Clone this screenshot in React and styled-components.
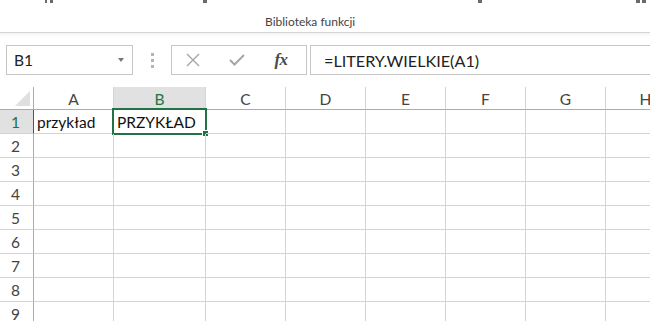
import React from "react";
import styled, { createGlobalStyle } from "styled-components";

const GlobalStyle = createGlobalStyle`
  html, body {
    margin: 0;
    padding: 0;
    background: #ffffff;
    overflow: hidden;
  }
  body {
    font-family: Lato, "Open Sans", sans-serif;
  }
`;

const GREEN = "#217346";

const Page = styled.div`
  width: 650px;
  height: 321px;
  overflow: hidden;
  background: #fff;
`;

const Ribbon = styled.div`
  height: 32px;
  border-bottom: 1px solid #d4d4d4;
  display: flex;
  flex-direction: column;
  justify-content: space-between;
  background: #fff;
`;

const CutRow = styled.div`
  display: flex;
  height: 3px;
  align-items: flex-start;
`;

const Cut = styled.span`
  display: block;
  margin-left: ${(p) => p.left}px;
  width: ${(p) => p.w}px;
  height: 3px;
  background: #6a6a6a;
`;

const GroupLabel = styled.div`
  padding-left: 265px;
  padding-bottom: 3px;
  font-family: Lato, sans-serif;
  font-size: 12px;
  color: #444;
`;

const FormulaBar = styled.div`
  height: 54px;
  display: flex;
  align-items: flex-start;
  padding: 12px 0 0 6px;
  box-sizing: border-box;
  background: linear-gradient(#f3f3f3 0px, #ffffff 4px);
`;

const NameBox = styled.div`
  width: 127px;
  height: 30px;
  border: 1px solid #c6c6c6;
  box-sizing: border-box;
  display: flex;
  align-items: center;
  justify-content: space-between;
  padding: 0 8px 0 7px;
  font-size: 15.5px;
  color: #222;
`;

const Arrow = styled.span`
  width: 0;
  height: 0;
  border-left: 3.5px solid transparent;
  border-right: 3.5px solid transparent;
  border-top: 4px solid #777;
`;

const Dots = styled.div`
  width: 38px;
  height: 30px;
  display: flex;
  flex-direction: column;
  align-items: center;
  justify-content: center;
  gap: 3px;
`;

const Dot = styled.span`
  width: 3px;
  height: 3px;
  background: #b4b4b4;
`;

const ButtonBox = styled.div`
  width: 136px;
  height: 30px;
  border: 1px solid #c6c6c6;
  box-sizing: border-box;
  display: flex;
  align-items: center;
  padding-left: 9px;
  gap: 20px;
`;

const IconSlot = styled.span`
  width: 24px;
  height: 20px;
  display: flex;
  align-items: center;
  justify-content: center;
`;

const Fx = styled.span`
  font-family: "Liberation Serif", serif;
  font-style: italic;
  font-weight: bold;
  font-size: 17px;
  color: #4a4a4a;
  letter-spacing: -0.5px;
`;

const FormulaInput = styled.div`
  flex: 1;
  height: 30px;
  margin-left: 3px;
  border: 1px solid #c6c6c6;
  border-right: none;
  box-sizing: border-box;
  display: flex;
  align-items: center;
  padding-left: 13px;
  font-size: 16.2px;
  color: #222;
`;

const Grid = styled.div`
  display: grid;
  grid-template-columns: 34px 80px 92px 80px 80px 80px 80px 80px 80px;
  grid-auto-rows: 24px;
  grid-template-rows: 23px;
  width: max-content;
`;

const Corner = styled.div`
  border-right: 1px solid #ababab;
  border-bottom: 1px solid #ababab;
  display: flex;
  align-items: flex-end;
  justify-content: flex-end;
  padding: 0 3px 3px 0;
`;

const ColHead = styled.div`
  border-right: 1px solid #d4d4d4;
  border-bottom: 1px solid ${(p) => (p.sel ? GREEN : "#ababab")};
  background: ${(p) => (p.sel ? "#e1e1e1" : "#fff")};
  color: ${(p) => (p.sel ? GREEN : "#444")};
  font-size: 15.5px;
  display: flex;
  align-items: center;
  justify-content: center;
  padding-top: 1px;
  white-space: nowrap;
`;

const RowHead = styled.div`
  border-right: 1px solid ${(p) => (p.sel ? GREEN : "#ababab")};
  border-bottom: 1px solid #d4d4d4;
  background: ${(p) => (p.sel ? "#e1e1e1" : "#fff")};
  color: ${(p) => (p.sel ? GREEN : "#444")};
  font-size: 15.5px;
  display: flex;
  align-items: center;
  justify-content: center;
  padding-right: 2px;
`;

const Cell = styled.div`
  position: relative;
  border-right: 1px solid #d4d4d4;
  border-bottom: 1px solid #d4d4d4;
  font-size: 15.5px;
  color: #111;
  display: flex;
  align-items: center;
  padding-left: 3px;
  white-space: nowrap;
  overflow: visible;
`;

const Selection = styled.div`
  position: absolute;
  left: -2px;
  top: -2px;
  right: -2px;
  bottom: -2px;
  border: 2px solid ${GREEN};
  pointer-events: none;
  &::after {
    content: "";
    position: absolute;
    right: -4px;
    bottom: -4px;
    width: 5px;
    height: 5px;
    background: ${GREEN};
    border: 1px solid #fff;
  }
`;

const cols = ["A", "B", "C", "D", "E", "F", "G", "H"];
const rows = [1, 2, 3, 4, 5, 6, 7, 8, 9];

const data = { "A1": "przykład", "B1": "PRZYKŁAD" };

export default function App() {
  return (
    <Page>
      <GlobalStyle />
      <Ribbon>
        <CutRow>
          <Cut left={45} w={2} />
          <Cut left={3} w={3} />
          <Cut left={150} w={4} />
          <Cut left={271} w={4} />
          <Cut left={154} w={4} />
          <Cut left={2} w={4} />
        </CutRow>
        <GroupLabel>Biblioteka funkcji</GroupLabel>
      </Ribbon>

      <FormulaBar>
        <NameBox>
          <span>B1</span>
          <Arrow />
        </NameBox>
        <Dots>
          <Dot />
          <Dot />
          <Dot />
        </Dots>
        <ButtonBox>
          <IconSlot>
            <svg width="14" height="14" viewBox="0 0 14 14">
              <path d="M1 1 L13 13 M13 1 L1 13" stroke="#a6a6a6" strokeWidth="1.4" fill="none" />
            </svg>
          </IconSlot>
          <IconSlot>
            <svg width="16" height="12" viewBox="0 0 16 12">
              <path d="M1 6 L5.5 10.5 L15 1" stroke="#a6a6a6" strokeWidth="2" fill="none" />
            </svg>
          </IconSlot>
          <IconSlot>
            <Fx>fx</Fx>
          </IconSlot>
        </ButtonBox>
        <FormulaInput>=LITERY.WIELKIE(A1)</FormulaInput>
      </FormulaBar>

      <Grid>
        <Corner>
          <svg width="15" height="15" viewBox="0 0 15 15">
            <path d="M15 0 L15 15 L0 15 Z" fill="#dfdfdf" />
          </svg>
        </Corner>
        {cols.map((c) => (
          <ColHead key={c} sel={c === "B"}>
            {c}
          </ColHead>
        ))}
        {rows.map((r) => (
          <React.Fragment key={r}>
            <RowHead sel={r === 1}>{r}</RowHead>
            {cols.map((c) => (
              <Cell key={c + r}>
                {data[c + r]}
                {c + r === "B1" && <Selection />}
              </Cell>
            ))}
          </React.Fragment>
        ))}
      </Grid>
    </Page>
  );
}
